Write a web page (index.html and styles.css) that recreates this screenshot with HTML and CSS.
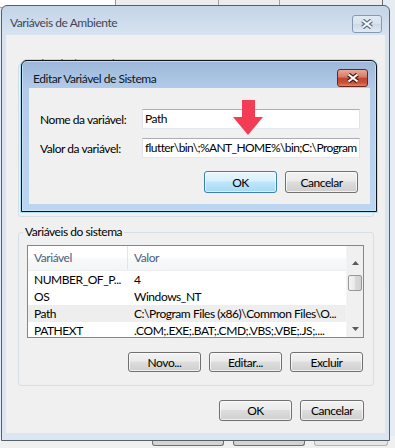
FILE: index.html
```html
<!DOCTYPE html>
<html lang="pt">
<head>
    <meta charset="UTF-8">
    <title>Variáveis de Ambiente</title>
    <link rel="stylesheet" href="styles.css">
</head>
<body>
<div class="desk">
    <div class="behind-top">
        <div class="bt-white"></div>
        <div class="bt-tab bt-a"></div>
        <div class="bt-tab bt-b"></div>
        <div class="bt-tab bt-c"></div>
    </div>

    <div class="behind-bottom">
        <span class="ghost-btn"></span>
        <span class="ghost-btn"></span>
        <span class="ghost-btn ghost-light"></span>
    </div>

    <!-- janela de trás -->
    <div class="window env">
        <div class="titlebar">
            <span class="title">Variáveis de Ambiente</span>
            <span class="close close-idle">
                <svg width="14" height="10" viewBox="0 0 14 10">
                    <path d="M2.5 1.5 L11.5 8.5 M11.5 1.5 L2.5 8.5" stroke="#5d6c80" stroke-width="4.4"/>
                    <path d="M2.5 1.5 L11.5 8.5 M11.5 1.5 L2.5 8.5" stroke="#f5f8fb" stroke-width="2.2"/>
                </svg>
            </span>
        </div>
        <div class="client">
            <fieldset class="group user-group">
                <legend>Variáveis de usuário para 5000</legend>
            </fieldset>

            <fieldset class="group sys-group">
                <legend>Variáveis do sistema</legend>
                <div class="listview">
                    <div class="lv-body">
                        <div class="lv-head">
                            <span class="lv-col1">Variável</span>
                            <span>Valor</span>
                        </div>
                        <div class="lv-row"><span class="lv-col1">NUMBER_OF_P...</span><span>4</span></div>
                        <div class="lv-row"><span class="lv-col1">OS</span><span>Windows_NT</span></div>
                        <div class="lv-row selected"><span class="lv-col1">Path</span><span>C:\Program Files (x86)\Common Files\O...</span></div>
                        <div class="lv-row"><span class="lv-col1">PATHEXT</span><span>.COM;.EXE;.BAT;.CMD;.VBS;.VBE;.JS;....</span></div>
                    </div>
                    <div class="scrollbar">
                        <div class="sb-btn sb-up">
                            <svg width="7" height="4" viewBox="0 0 7 4"><path d="M0 4 L3.5 0 L7 4 Z" fill="#5a5a5a"/></svg>
                        </div>
                        <div class="sb-track"><div class="sb-thumb"></div></div>
                        <div class="sb-btn sb-down">
                            <svg width="7" height="4" viewBox="0 0 7 4"><path d="M0 0 L7 0 L3.5 4 Z" fill="#5a5a5a"/></svg>
                        </div>
                    </div>
                </div>
                <div class="btn-row group-btns">
                    <button class="btn">Novo...</button>
                    <button class="btn">Editar...</button>
                    <button class="btn">Excluir</button>
                </div>
            </fieldset>

            <div class="btn-row footer">
                <button class="btn">OK</button>
                <button class="btn btn-narrow">Cancelar</button>
            </div>
        </div>
    </div>

    <!-- janela da frente -->
    <div class="window edit">
        <div class="titlebar">
            <span class="title">Editar Variável de Sistema</span>
            <span class="close close-red">
                <svg width="14" height="10" viewBox="0 0 14 10">
                    <path d="M2.5 1.5 L11.5 8.5 M11.5 1.5 L2.5 8.5" stroke="#4a1a10" stroke-width="4.4"/>
                    <path d="M2.5 1.5 L11.5 8.5 M11.5 1.5 L2.5 8.5" stroke="#ffffff" stroke-width="2.2"/>
                </svg>
            </span>
        </div>
        <div class="client edit-client">
            <div class="form">
                <label>Nome da variável:</label>
                <div class="textbox">Path</div>
                <label>Valor da variável:</label>
                <div class="textbox textbox-long">flutter\bin\;%ANT_HOME%\bin;C:\Program</div>
            </div>
            <div class="btn-row edit-btns">
                <button class="btn btn-tall default">OK</button>
                <button class="btn btn-tall">Cancelar</button>
            </div>
        </div>
    </div>

    <svg class="arrow" width="32" height="38" viewBox="0 0 32 38">
        <rect x="10" y="1" width="13" height="18" fill="#f33c55"/>
        <polygon points="1,18 31,18 16,36" fill="#f33c55"/>
    </svg>
</div>
</body>
</html>
```

FILE: styles.css
```css
* {
    box-sizing: border-box;
}
html, body {
    margin: 0;
}
body {
    width: 395px;
    height: 448px;
    overflow: hidden;
    background: #e6ecf3;
    font-family: "Segoe UI", Lato, "Noto Sans", sans-serif;
    font-size: 12px;
    letter-spacing: -0.45px;
    color: #000;
}
.desk {
    position: relative;
    width: 395px;
    height: 448px;
}

/* pedaços das janelas de trás */
.behind-top {
    position: absolute;
    left: 0;
    top: 0;
    width: 395px;
    height: 8px;
    display: flex;
}
.bt-white {
    width: 116px;
    background: #fff;
    border-right: 1px solid #9a9a9a;
    border-bottom: 1px solid #a5a5a5;
}
.bt-tab {
    background: #ececec;
    border-right: 1px solid #a0a0a0;
    border-bottom: 1px solid #b5b5b5;
}
.bt-a { width: 103px; }
.bt-b { width: 61px; }
.bt-c { width: 103px; border-right-color: #6a6a6a; }

.behind-bottom {
    position: absolute;
    left: 0;
    top: 436px;
    width: 395px;
    height: 12px;
    background: #f0f0f0;
    display: flex;
    gap: 9px;
    padding-left: 152px;
}
.ghost-btn {
    width: 72px;
    height: 10px;
    border: 1px solid #707070;
    border-top: none;
    border-radius: 0 0 3px 3px;
    background: #d4d4d4;
}
.ghost-light {
    width: 74px;
    border-color: #b4b4b4;
    background: #e6e6e6;
}

/* janelas */
.window {
    position: absolute;
    display: flex;
    flex-direction: column;
    border: 1px solid;
    border-radius: 6px 6px 0 0;
}
.titlebar {
    display: flex;
    align-items: flex-start;
    flex: none;
}
.title {
    flex: 1;
    line-height: 16px;
    white-space: nowrap;
}
.close {
    display: flex;
    align-items: center;
    justify-content: center;
    height: 18px;
    border-radius: 3px;
    border: 1px solid;
}
.client {
    flex: 1;
    background: #f0f0f0;
    display: flex;
    flex-direction: column;
}

.env {
    left: 1px;
    top: 5px;
    width: 389px;
    height: 436px;
    border-color: #56606b;
    background: linear-gradient(#c3d4e7, #d8e3f0 30px, #dce6f2);
    padding: 0 4px 7px;
}
.env .titlebar {
    height: 29px;
}
.env .title {
    padding: 9px 0 0 4px;
    color: #3c4859;
}
.close-idle {
    width: 30px;
    margin: 9px 3px 0 0;
    border-color: #8799b0;
    background: linear-gradient(rgba(255,255,255,.45), rgba(255,255,255,.15) 50%, rgba(190,205,225,.3) 50%, rgba(255,255,255,.3));
}

.edit {
    left: 21px;
    top: 60px;
    width: 356px;
    height: 152px;
    border-color: #101418;
    background: linear-gradient(#9cb7d9, #b3cbe9 27px, #bcd6f1);
    padding: 0 6px 7px 7px;
    box-shadow: 0 0 0 1px rgba(130, 205, 240, .55), inset 0 0 0 1px rgba(200, 230, 250, .8);
}
.edit .titlebar {
    height: 27px;
}
.edit .title {
    padding: 10px 0 0 4px;
    color: #0c1626;
}
.close-red {
    width: 31px;
    margin: 8px 2px 0 0;
    border-color: #6a261b;
    background: linear-gradient(#e9a897, #d47a64 45%, #c4452d 50%, #c85139 80%, #d9876b);
}

/* grupos */
.group {
    margin: 0 11px 0 12px;
    min-width: 0;
    border: 1px solid #d5dfe5;
    border-radius: 3px;
    padding: 5px 9px 13px 8px;
}
.group legend {
    padding: 0 2px;
    margin-left: -4px;
    line-height: 16px;
    color: #000;
}
.user-group {
    margin-top: 21px;
    height: 161px;
}
.sys-group {
    margin-top: 7px;
}

/* lista */
.listview {
    display: flex;
    height: 93px;
    border: 1px solid #828790;
    background: #fff;
}
.lv-body {
    flex: 1;
    min-width: 0;
    overflow: hidden;
}
.lv-head,
.lv-row {
    display: grid;
    grid-template-columns: 100px 1fr;
    white-space: nowrap;
}
.lv-head {
    height: 25px;
    line-height: 24px;
    color: #4c607a;
    background: linear-gradient(#ffffff, #ffffff 50%, #f8f9fa 50%, #f4f5f7);
    border-bottom: 1px solid #eceef0;
}
.lv-head span {
    padding-left: 6px;
}
.lv-head .lv-col1 {
    border-right: 1px solid #e2e5ea;
}
.lv-row {
    height: 17px;
    line-height: 17px;
}
.lv-row span {
    padding-left: 6px;
    overflow: hidden;
}
.lv-row.selected {
    background: #eeeeee;
}

.scrollbar {
    width: 17px;
    flex: none;
    display: flex;
    flex-direction: column;
    background: #f0f0f0;
    border-left: 1px solid #f4f4f4;
}
.sb-btn {
    display: flex;
    justify-content: center;
}
.sb-up {
    height: 25px;
    align-items: flex-end;
    padding-bottom: 6px;
}
.sb-down {
    height: 17px;
    align-items: center;
}
.sb-track {
    flex: 1;
    padding: 4px 1px 0 1px;
}
.sb-thumb {
    height: 16px;
    border: 1px solid #979797;
    border-radius: 2px;
    background: linear-gradient(to right, #f4f4f4, #e8e8e8 50%, #d9d9d9 50%, #d2d2d2);
}

/* botões */
.btn-row {
    display: flex;
    justify-content: flex-end;
    gap: 8px;
}
.btn {
    width: 73px;
    height: 20px;
    padding: 0;
    font: inherit;
    letter-spacing: inherit;
    color: #000;
    border: 1px solid #707070;
    border-radius: 3px;
    background: linear-gradient(#f2f2f2, #ebebeb 45%, #dddddd 50%, #cfcfcf);
    box-shadow: inset 0 0 0 1px rgba(255, 255, 255, .7);
}
.btn-narrow {
    width: 64px;
}
.btn-tall {
    height: 22px;
}
.btn.default {
    border-color: #3c7fb1;
    background: linear-gradient(#eaf6fd, #d9f0fc 45%, #bee6fd 50%, #a7d9f5);
    box-shadow: inset 0 0 0 1px rgba(255, 255, 255, .6);
}
.group-btns {
    margin: 14px 1px 0 0;
}
.footer {
    margin-top: 14px;
    padding-right: 21px;
}
.footer .btn {
    height: 21px;
}

/* diálogo de edição */
.edit-client {
    padding: 21px 10px 10px 11px;
}
.form {
    display: grid;
    grid-template-columns: 102px 1fr;
    row-gap: 9px;
    align-items: center;
}
.textbox {
    height: 20px;
    line-height: 18px;
    padding-left: 2px;
    background: #fff;
    border: 1px solid #e2e3ea;
    border-top-color: #abadb3;
    border-bottom-color: #e3e9ef;
    white-space: nowrap;
    overflow: hidden;
}
.textbox-long {
    letter-spacing: -0.6px;
}
.edit-btns {
    margin: 13px 2px 0 0;
}

.arrow {
    position: absolute;
    left: 232px;
    top: 99px;
}
```
